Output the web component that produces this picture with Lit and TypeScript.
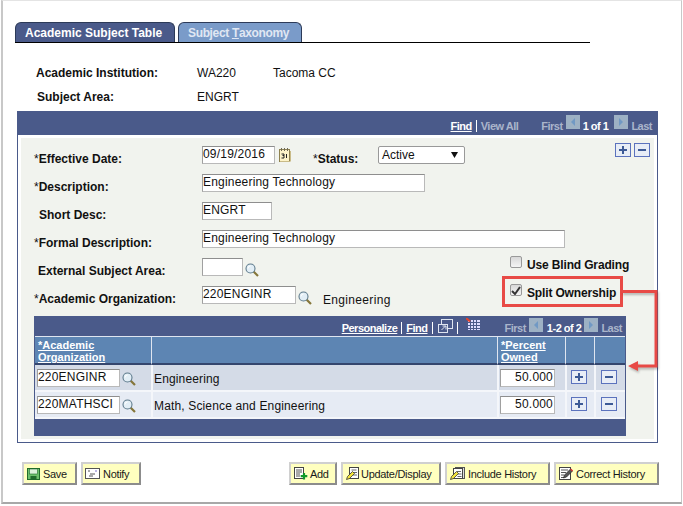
import { LitElement, html, css, svg } from "lit";
import { customElement } from "lit/decorators.js";

const lookup = html`<svg class="ic lk" width="14" height="14" viewBox="0 0 14 14">
  <line x1="8.500" y1="8.500" x2="13" y2="13" stroke="#85763a" stroke-width="2.200"/>
  <circle cx="5.500" cy="5.500" r="4.500" fill="#e2eef6" stroke="#5e7a8c" stroke-width="1.100"/>
  <path d="M3 5.500a2.500 2.500 0 0 1 2.500-2.500" fill="none" stroke="#fff"/>
</svg>`;

const cal = html`<svg class="ic" width="13" height="16" viewBox="0 0 13 16">
  <rect x="1.500" y="2.500" width="10" height="12" fill="#fdf3c8" stroke="#8f8250"/>
  <path d="M2 14.500h10.500M12.500 4v10" stroke="#c9bb88"/>
  <path d="M3.500 1v3M6.500 1v3M9.500 1v3" stroke="#6f6a55"/>
  <path d="M3.500 7h2.500v1.500H4.500M6 8.500V11H3.500M8.500 7v4" fill="none" stroke="#222"/>
</svg>`;

const plus = html`<svg class="ic" width="16" height="14" viewBox="0 0 16 14">
  <rect x="0.500" y="0.500" width="15" height="13" fill="#e8edf6" stroke="#5b72bd"/>
  <path d="M8 3v8M4 7h8" stroke="#3d5a96" stroke-width="2"/>
</svg>`;
const minus = html`<svg class="ic" width="16" height="14" viewBox="0 0 16 14">
  <rect x="0.500" y="0.500" width="15" height="13" fill="#e8edf6" stroke="#5b72bd"/>
  <path d="M4 7h8" stroke="#3d5a96" stroke-width="2"/>
</svg>`;
const navBtn = (d: string) => html`<svg class="ic nb" width="14" height="14" viewBox="0 0 14 14">
  <rect width="14" height="14" fill="#9db1c4"/>
  <path d="${d}" fill="#7199c4"/>
</svg>`;
const prev = navBtn("M9 3v8L5 7z");
const next = navBtn("M5 3v8l4-4z");

const saveIc = html`<svg class="ic" width="13" height="12" viewBox="0 0 13 12">
  <rect x="0.500" y="0.500" width="12" height="11" fill="#6cc06c" stroke="#1f6b2c"/>
  <rect x="2.500" y="1" width="8" height="5" fill="#dcf2dc" stroke="#1f6b2c" stroke-width="0.600"/>
  <rect x="3.500" y="8" width="6" height="3.500" fill="#1f6b2c"/>
</svg>`;
const notifyIc = html`<svg class="ic" width="15" height="11" viewBox="0 0 15 11">
  <rect x="0.500" y="0.500" width="14" height="10" fill="#fff" stroke="#555"/>
  <path d="M3 3h2M5 6h5M4 8h4" stroke="#555"/>
  <path d="M10 3h2" stroke="#7a6fc8"/>
</svg>`;
const addIc = html`<svg class="ic" width="14" height="13" viewBox="0 0 14 13">
  <rect x="0.500" y="0.500" width="9" height="11" fill="#fff" stroke="#444"/>
  <path d="M2 3h6M2 5h6M2 7h4M2 9h4" stroke="#555"/>
  <path d="M10 6v6.500M6.700 9.200h6.600" stroke="#119a2a" stroke-width="2.200"/>
</svg>`;
const updIc = html`<svg class="ic" width="13" height="13" viewBox="0 0 13 13">
  <rect x="3.500" y="0.500" width="9" height="11" fill="#fff" stroke="#444"/>
  <path d="M5.500 3h5M7 5.500h4M7 8h4" stroke="#666"/>
  <path d="M0.500 12.500l1-3 5-5 2 2-5 5z" fill="#f2e23a" stroke="#333" stroke-width="0.800"/>
</svg>`;
const incIc = html`<svg class="ic" width="15" height="13" viewBox="0 0 15 13">
  <rect x="5.500" y="0.500" width="9" height="11" fill="#ddd" stroke="#555"/>
  <rect x="3.500" y="1.500" width="9" height="10" fill="#fff" stroke="#444"/>
  <path d="M7 4.500h4M7.500 7h4M7.500 9.500h4" stroke="#666"/>
  <path d="M0.500 12.500l1-3 5-5 2 2-5 5z" fill="#f2e23a" stroke="#333" stroke-width="0.800"/>
</svg>`;
const corIc = html`<svg class="ic" width="15" height="13" viewBox="0 0 15 13">
  <rect x="0.500" y="0.500" width="11" height="12" fill="#fff" stroke="#444"/>
  <path d="M2 3h7M2 5.500h5M2 8h3M2 10.500h3" stroke="#555"/>
  <path d="M4.500 11l1-3 6-6 2 2-6 6z" fill="#555" stroke="#222" stroke-width="0.700"/>
  <path d="M11.500 2l2 2" stroke="#d33" stroke-width="1.400"/>
</svg>`;
const expandIc = html`<svg class="ic xp" width="15" height="14" viewBox="0 0 15 14">
  <rect x="3.500" y="0.500" width="11" height="9" fill="none" stroke="#dfe5f0"/>
  <rect x="0.500" y="5.500" width="9" height="8" fill="#4a5a8a" stroke="#dfe5f0"/>
  <path d="M3.500 11l4-4M4.500 7h3.500v3.500" fill="none" stroke="#dfe5f0"/>
</svg>`;
const gridIc = html`<svg class="ic gd" width="14" height="12" viewBox="0 0 14 12">
  <rect x="2" y="2" width="12" height="10" fill="#dcdcff"/>
  <path d="M4.500 2v10M7.500 2v10M10.500 2v10M2 4.500h12M2 7.500h12M2 10.500h12" stroke="#4a5a8a"/>
  <path d="M0 0l4 3.500" stroke="#e8402a" stroke-width="2"/>
</svg>`;

@customElement("app-root")
export class AppRoot extends LitElement {
  static styles = css`
    :host { display: block; width: 683px; height: 506px; background: #fff; font: 12px "Liberation Sans", Arial, sans-serif; color: #111; }
    * { box-sizing: border-box; }
    .ic { display: block; flex: none; }
    .card { position: relative; height: 504px; margin: 0 1px; border: 1px solid #c8c8c8; border-top-color: #e4e4e4; border-bottom: 2px solid #a8a8a8; border-left-width: 2px; background: #fff; padding: 21px 0 0 12px; }
    .tabs { display: flex; width: 575px; height: 21px; border-bottom: 1px solid #000; gap: 3px; }
    .tab { height: 20px; border: 1px solid #2c3a58; border-bottom: 0; border-radius: 6px 6px 0 0; font-weight: bold; display: flex; align-items: center; padding-top: 1px; }
    .tab.a { width: 160px; background: #4a5a8a; color: #fff; padding-left: 9px; }
    .tab.b { width: 124px; background: #7a9bc9; color: #e0e7f3; padding-left: 9px; letter-spacing: -.35px; white-space: pre; }
    .keys { display: grid; grid-template-columns: 161px 76px auto; padding: 23px 0 0 21px; height: 68px; row-gap: 10px; grid-auto-rows: 14px; }
    .keys .s2 { padding-left: 1px; }
    .panel { width: 641px; height: 332px; margin-left: 2px; border: 1px solid #4a5a8a; border-top: 0; padding: 0 3px 2px 3px; }
    .phead { height: 24px; margin: 0 -3px; background: #4a5a8a; display: flex; align-items: center; justify-content: flex-end; padding: 5px 5px 0 0; color: #fff; font-size: 11px; letter-spacing: -.5px; font-weight: bold; }
    .muted { color: #aab5cb; }
    .phead a, .tnav a { color: #fff; text-decoration: underline; }
    .sep { width: 1px; height: 12px; background: #fff; margin: 0 4px; flex: none; }
    .nb { margin-top: -7px; }
    .tnav .nb { margin-top: -6px; }
    .ml3 { margin-left: 3px; }
    .ml4 { margin-left: 4px; }
    .ml6 { margin-left: 6px; }
    .g23 { margin-left: 23px; }
    .g25 { margin-left: 25px; }
    .xp { margin: -4px 0 0 1px; }
    .gd { margin: -8px 0 0 4px; }
    .body { position: relative; margin-top: 3px; background: #f1f3ee; height: 301px; padding: 8px 0 0 13px; }
    .row { display: flex; align-items: flex-start; height: 28px; }
    .lab { width: 168px; font-weight: bold; padding-top: 6px; white-space: nowrap; }
    .lab i { font-style: normal; font-weight: normal; }
    .lab.ind { padding-left: 5px; }
    .lab.ext { padding-left: 4px; }
    .in { height: 18px; background: #fff; border: 1px solid #b9b9b9; border-top-color: #8e8e8e; border-left-color: #a0a0a0; padding: 0; line-height: 14px; color: #111; white-space: nowrap; letter-spacing: .2px; overflow: hidden; }
    .w73 { width: 73px; } .w223 { width: 223px; } .w70 { width: 70px; } .w363 { width: 363px; } .w41 { width: 41px; } .w94 { width: 94px; } .w83 { width: 83px; }
    .calw { margin: 1px 0 0 3px; }
    .status { display: flex; margin-left: 22px; }
    .status .lab { width: 65px; }
    .sel { width: 87px; height: 18px; background: #fff; border: 1px solid #999; border-radius: 2px; display: flex; justify-content: space-between; align-items: center; padding: 0 6px 0 3px; }
    .sel svg { display: block; }
    .addrem { position: absolute; right: 4px; top: 5px; display: flex; gap: 3px; }
    .lkw { margin: 5px 0 0 2px; }
    .org { margin: 7px 0 0 11px; letter-spacing: .33px; }
    .right { margin-left: auto; margin-right: 24px; width: 120px; padding-top: 1px; display: flex; gap: 5px; align-items: flex-start; font-weight: bold; line-height: 12px; letter-spacing: -.15px; white-space: nowrap; }
    .cb { width: 12px; height: 12px; margin-top: -3px; border: 1px solid #999; border-radius: 2px; background: linear-gradient(#d8d8d8, #f4f4f4); display: flex; align-items: center; justify-content: center; flex: none; }
    .table { position: absolute; left: 13px; top: 178px; width: 592px; height: 120px; background: #4a5a8a; padding-top: 20px; }
    .tnav { position: absolute; top: 0; right: 4px; height: 20px; display: flex; align-items: center; color: #fff; padding-top: 4px; font-size: 11px; letter-spacing: -.5px; font-weight: bold; }
    table { border-collapse: separate; border-spacing: 0; width: 590px; margin-left: 1px; table-layout: fixed; }
    .c1 { width: 116px; } .c2 { width: 346px; } .c3 { width: 68px; } .c4 { width: 29px; } .c5 { width: 31px; }
    th { background: #5d85b3; height: 29px; border-left: 1px solid #dfe5f0; border-top: 1px solid #dfe5f0; border-bottom: 2px solid #34466e; text-align: left; vertical-align: middle; padding: 2px 0 0 3px; color: #fff; line-height: 12px; font-size: 11px; }
    th:first-child { border-left: 0; }
    th a { color: #fff; text-decoration: underline; }
    td { height: 27px; padding: 0; border-left: 2px solid #f4f6fa; border-bottom: 2px solid #f4f6fa; vertical-align: middle; }
    td:first-child { border-left: 0; }
    tr.o td { background: #d4dbe7; }
    tr.e td { background: #e6ebf4; }
    .cell { display: flex; align-items: center; gap: 2px; padding-left: 2px; }
    .cell .lk { margin-top: 3px; }
    .txt { padding: 2px 0 0 1px; letter-spacing: .15px; }
    .pct { width: 55px; margin-left: 1px; text-align: right; padding-right: 1px; }
    .ctr { display: flex; justify-content: center; padding: 0 4px 2px 0; }
    .btns { display: flex; margin: 19px 0 0 7px; }
    .btn { height: 23px; background: #ffffbf; border: 2px solid #d0d0d0; border-right-color: #8c8c8c; border-bottom-color: #8c8c8c; display: flex; align-items: center; gap: 3px; padding-left: 3px; white-space: nowrap; color: #1a1a1a; font-size: 11px; letter-spacing: -.3px; }
    .btn.t2 { gap: 2px; }
    .b55 { width: 55px; } .b60 { width: 60px; margin-left: 4px; padding-left: 2px; } .b48 { width: 48px; margin-left: 148px; } .b100 { width: 100px; margin-left: 4px; } .b105 { width: 105px; margin-left: 4px; }
    .anno { position: absolute; left: 0; top: 0; pointer-events: none; }
    .arrow { filter: drop-shadow(1px 2px 1px rgba(0,0,0,.25)); }
    .box { position: absolute; left: 499px; top: 275px; width: 121px; height: 31px; border: 3px solid #e84a46; }
  `;

  render() {
    return html`<div class="card">
      <div class="tabs">
        <div class="tab a">Academic Subject Table</div>
        <div class="tab b">Subject <u>T</u>axonomy</div>
      </div>
      <div class="keys">
        <b>Academic Institution:</b><span>WA220</span><span>Tacoma CC</span>
        <b class="s2">Subject Area:</b><span>ENGRT</span>
      </div>
      <div class="panel">
        <div class="phead">
          <a>Find</a><span class="sep"></span><span class="muted">View All</span>
          <span class="muted g23">First</span>
          <span class="ml3">${prev}</span><span class="ml3">1 of 1</span><span class="ml6">${next}</span>
          <span class="muted ml3">Last</span>
        </div>
        <div class="body">
          <div class="addrem">${plus}${minus}</div>
          <div class="row">
            <div class="lab"><i>*</i>Effective Date:</div>
            <div class="in w73">09/19/2016</div>
            <div class="calw">${cal}</div>
            <div class="status"><div class="lab"><i>*</i>Status:</div>
              <div class="sel">Active<svg width="7" height="6" viewBox="0 0 7 6"><path d="M0 0h7L3.500 6z" fill="#111"/></svg></div></div>
          </div>
          <div class="row"><div class="lab"><i>*</i>Description:</div><div class="in w223">Engineering Technology</div></div>
          <div class="row"><div class="lab ind">Short Desc:</div><div class="in w70">ENGRT</div></div>
          <div class="row"><div class="lab"><i>*</i>Formal Description:</div><div class="in w363">Engineering Technology</div></div>
          <div class="row"><div class="lab ext">External Subject Area:</div><div class="in w41"></div>
            <div class="lkw">${lookup}</div>
            <div class="right"><span class="cb"></span>Use Blind Grading</div></div>
          <div class="row"><div class="lab"><i>*</i>Academic Organization:</div><div class="in w94">220ENGINR</div>
            <div class="lkw">${lookup}</div>
            <span class="org">Engineering</span>
            <div class="right"><span class="cb"><svg width="10" height="9" viewBox="0 0 10 9"><path d="M1 5l3 3 5-7" fill="none" stroke="#333" stroke-width="2"/></svg></span>Split Ownership</div></div>
          <div class="table">
            <div class="tnav"><a>Personalize</a><span class="sep"></span><a>Find</a><span class="sep"></span>${expandIc}<span class="sep"></span>${gridIc}
              <span class="muted g25">First</span><span class="ml3">${prev}</span><span class="ml4">1-2 of 2</span><span class="ml3">${next}</span><span class="muted ml3">Last</span></div>
            <table>
              <colgroup><col class="c1"><col class="c2"><col class="c3"><col class="c4"><col class="c5"></colgroup>
              <tr><th><a>*Academic<br>Organization</a></th><th></th><th><a>*Percent<br>Owned</a></th><th></th><th></th></tr>
              <tr class="o"><td><div class="cell"><div class="in w83">220ENGINR</div>${lookup}</div></td><td><div class="txt">Engineering</div></td><td><div class="in pct">50.000</div></td><td><div class="ctr">${plus}</div></td><td><div class="ctr">${minus}</div></td></tr>
              <tr class="e"><td><div class="cell"><div class="in w83">220MATHSCI</div>${lookup}</div></td><td><div class="txt">Math, Science and Engineering</div></td><td><div class="in pct">50.000</div></td><td><div class="ctr">${plus}</div></td><td><div class="ctr">${minus}</div></td></tr>
            </table>
          </div>
        </div>
      </div>
      <div class="btns">
        <div class="btn b55">${saveIc}Save</div>
        <div class="btn b60">${notifyIc}Notify</div>
        <div class="btn b48 t2">${addIc}Add</div>
        <div class="btn b100 t2">${updIc}Update/Display</div>
        <div class="btn b105">${incIc}Include History</div>
        <div class="btn b105 t2">${corIc}Correct History</div>
      </div>
      <div class="box"></div>
      <svg class="anno" width="680" height="500">${svg`
        <g class="arrow"><path d="M619 290.500H653V365H632" fill="none" stroke="#e84a46" stroke-width="3"/>
        <path d="M625 365l10-5v10z" fill="#e84a46"/></g>`}</svg>
    </div>`;
  }
}
